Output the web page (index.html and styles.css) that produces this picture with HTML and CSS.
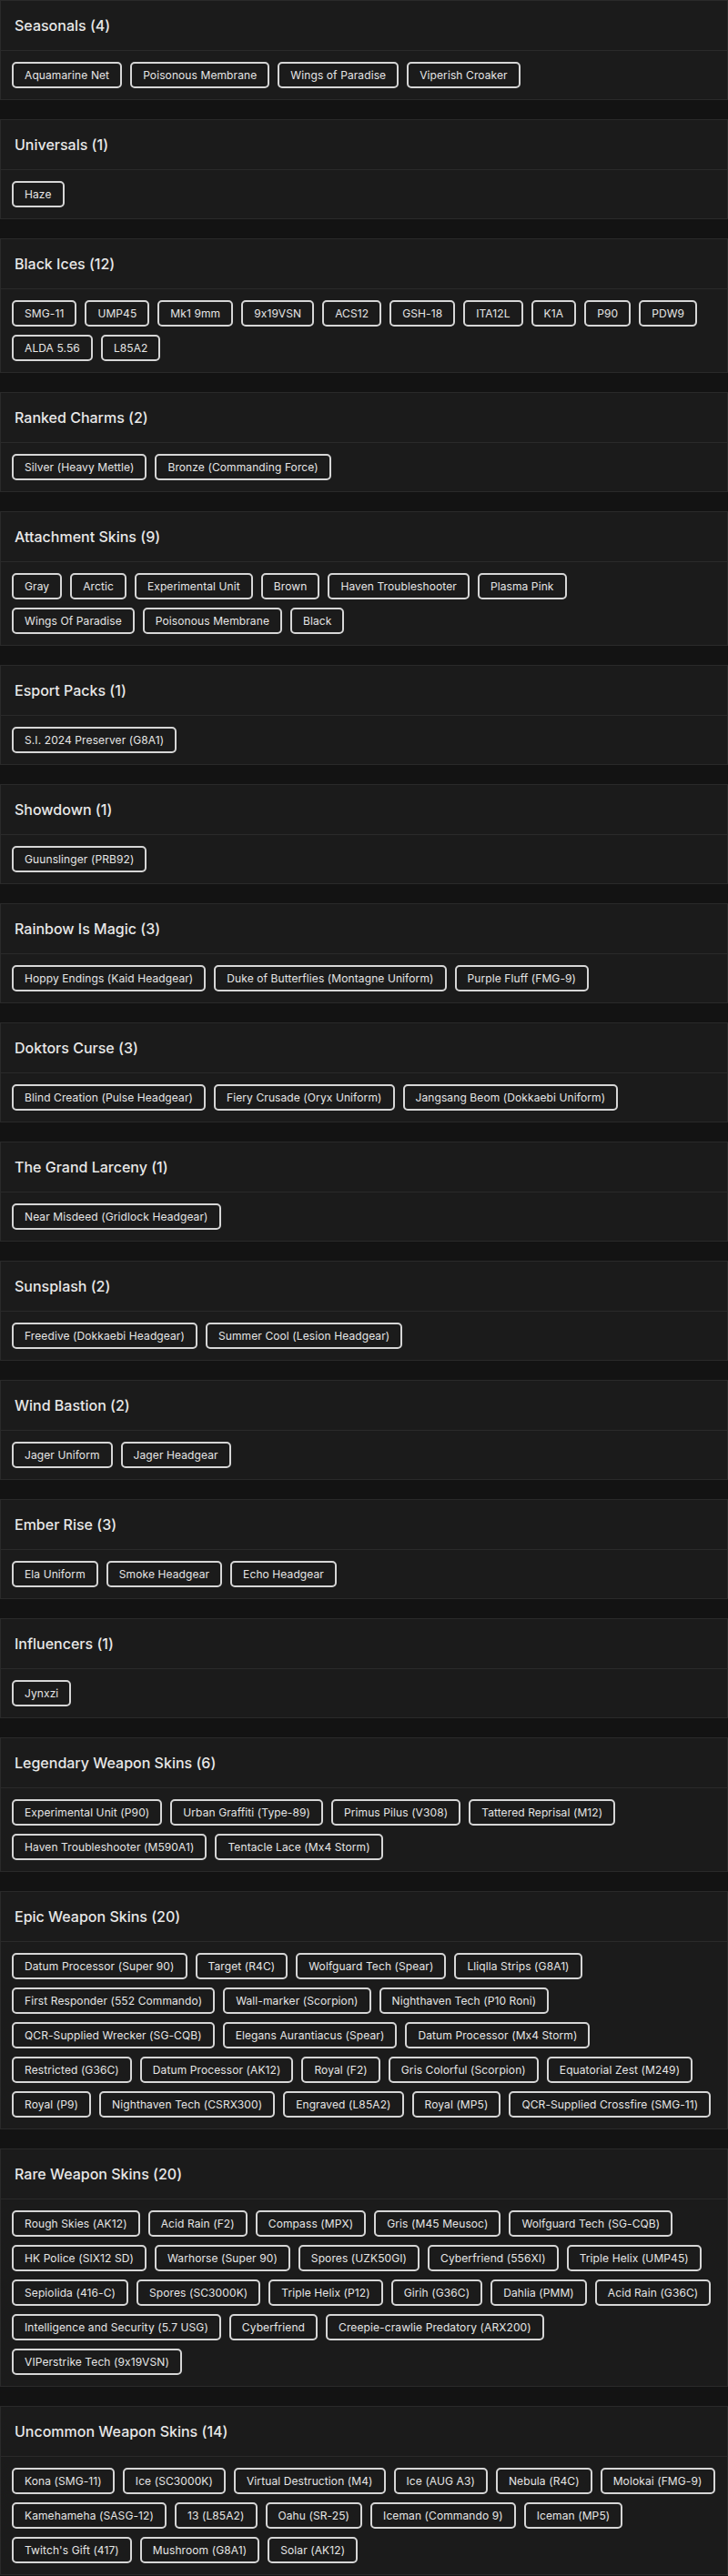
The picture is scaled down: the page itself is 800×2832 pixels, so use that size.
FILE: index.html
```html
<!DOCTYPE html>
<html lang="en">
<head>
<meta charset="utf-8">
<title>Collection</title>
<link rel="stylesheet" href="styles.css">
</head>
<body>
<main class="list">

<section class="card">
  <h2 class="card-head">Seasonals (4)</h2>
  <div class="chips">
    <div class="row"><span class="chip">Aquamarine Net</span><span class="chip">Poisonous Membrane</span><span class="chip">Wings of Paradise</span><span class="chip">Viperish Croaker</span></div>
  </div>
</section>

<section class="card">
  <h2 class="card-head">Universals (1)</h2>
  <div class="chips">
    <div class="row"><span class="chip">Haze</span></div>
  </div>
</section>

<section class="card">
  <h2 class="card-head">Black Ices (12)</h2>
  <div class="chips">
    <div class="row"><span class="chip">SMG-11</span><span class="chip">UMP45</span><span class="chip">Mk1 9mm</span><span class="chip">9x19VSN</span><span class="chip">ACS12</span><span class="chip">GSH-18</span><span class="chip">ITA12L</span><span class="chip">K1A</span><span class="chip">P90</span><span class="chip">PDW9</span></div>
    <div class="row"><span class="chip">ALDA 5.56</span><span class="chip">L85A2</span></div>
  </div>
</section>

<section class="card">
  <h2 class="card-head">Ranked Charms (2)</h2>
  <div class="chips">
    <div class="row"><span class="chip">Silver (Heavy Mettle)</span><span class="chip">Bronze (Commanding Force)</span></div>
  </div>
</section>

<section class="card">
  <h2 class="card-head">Attachment Skins (9)</h2>
  <div class="chips">
    <div class="row"><span class="chip">Gray</span><span class="chip">Arctic</span><span class="chip">Experimental Unit</span><span class="chip">Brown</span><span class="chip">Haven Troubleshooter</span><span class="chip">Plasma Pink</span></div>
    <div class="row"><span class="chip">Wings Of Paradise</span><span class="chip">Poisonous Membrane</span><span class="chip">Black</span></div>
  </div>
</section>

<section class="card">
  <h2 class="card-head">Esport Packs (1)</h2>
  <div class="chips">
    <div class="row"><span class="chip">S.I. 2024 Preserver (G8A1)</span></div>
  </div>
</section>

<section class="card">
  <h2 class="card-head">Showdown (1)</h2>
  <div class="chips">
    <div class="row"><span class="chip">Guunslinger (PRB92)</span></div>
  </div>
</section>

<section class="card">
  <h2 class="card-head">Rainbow Is Magic (3)</h2>
  <div class="chips">
    <div class="row"><span class="chip">Hoppy Endings (Kaid Headgear)</span><span class="chip">Duke of Butterflies (Montagne Uniform)</span><span class="chip">Purple Fluff (FMG-9)</span></div>
  </div>
</section>

<section class="card">
  <h2 class="card-head">Doktors Curse (3)</h2>
  <div class="chips">
    <div class="row"><span class="chip">Blind Creation (Pulse Headgear)</span><span class="chip">Fiery Crusade (Oryx Uniform)</span><span class="chip">Jangsang Beom (Dokkaebi Uniform)</span></div>
  </div>
</section>

<section class="card">
  <h2 class="card-head">The Grand Larceny (1)</h2>
  <div class="chips">
    <div class="row"><span class="chip">Near Misdeed (Gridlock Headgear)</span></div>
  </div>
</section>

<section class="card">
  <h2 class="card-head">Sunsplash (2)</h2>
  <div class="chips">
    <div class="row"><span class="chip">Freedive (Dokkaebi Headgear)</span><span class="chip">Summer Cool (Lesion Headgear)</span></div>
  </div>
</section>

<section class="card">
  <h2 class="card-head">Wind Bastion (2)</h2>
  <div class="chips">
    <div class="row"><span class="chip">Jager Uniform</span><span class="chip">Jager Headgear</span></div>
  </div>
</section>

<section class="card">
  <h2 class="card-head">Ember Rise (3)</h2>
  <div class="chips">
    <div class="row"><span class="chip">Ela Uniform</span><span class="chip">Smoke Headgear</span><span class="chip">Echo Headgear</span></div>
  </div>
</section>

<section class="card">
  <h2 class="card-head">Influencers (1)</h2>
  <div class="chips">
    <div class="row"><span class="chip">Jynxzi</span></div>
  </div>
</section>

<section class="card">
  <h2 class="card-head">Legendary Weapon Skins (6)</h2>
  <div class="chips">
    <div class="row"><span class="chip">Experimental Unit (P90)</span><span class="chip">Urban Graffiti (Type-89)</span><span class="chip">Primus Pilus (V308)</span><span class="chip">Tattered Reprisal (M12)</span></div>
    <div class="row"><span class="chip">Haven Troubleshooter (M590A1)</span><span class="chip">Tentacle Lace (Mx4 Storm)</span></div>
  </div>
</section>

<section class="card">
  <h2 class="card-head">Epic Weapon Skins (20)</h2>
  <div class="chips">
    <div class="row"><span class="chip">Datum Processor (Super 90)</span><span class="chip">Target (R4C)</span><span class="chip">Wolfguard Tech (Spear)</span><span class="chip">Lliqlla Strips (G8A1)</span></div>
    <div class="row"><span class="chip">First Responder (552 Commando)</span><span class="chip">Wall-marker (Scorpion)</span><span class="chip">Nighthaven Tech (P10 Roni)</span></div>
    <div class="row"><span class="chip">QCR-Supplied Wrecker (SG-CQB)</span><span class="chip">Elegans Aurantiacus (Spear)</span><span class="chip">Datum Processor (Mx4 Storm)</span></div>
    <div class="row"><span class="chip">Restricted (G36C)</span><span class="chip">Datum Processor (AK12)</span><span class="chip">Royal (F2)</span><span class="chip">Gris Colorful (Scorpion)</span><span class="chip">Equatorial Zest (M249)</span></div>
    <div class="row"><span class="chip">Royal (P9)</span><span class="chip">Nighthaven Tech (CSRX300)</span><span class="chip">Engraved (L85A2)</span><span class="chip">Royal (MP5)</span><span class="chip">QCR-Supplied Crossfire (SMG-11)</span></div>
  </div>
</section>

<section class="card">
  <h2 class="card-head">Rare Weapon Skins (20)</h2>
  <div class="chips">
    <div class="row"><span class="chip">Rough Skies (AK12)</span><span class="chip">Acid Rain (F2)</span><span class="chip">Compass (MPX)</span><span class="chip">Gris (M45 Meusoc)</span><span class="chip">Wolfguard Tech (SG-CQB)</span></div>
    <div class="row"><span class="chip">HK Police (SIX12 SD)</span><span class="chip">Warhorse (Super 90)</span><span class="chip">Spores (UZK50GI)</span><span class="chip">Cyberfriend (556XI)</span><span class="chip">Triple Helix (UMP45)</span></div>
    <div class="row"><span class="chip">Sepiolida (416-C)</span><span class="chip">Spores (SC3000K)</span><span class="chip">Triple Helix (P12)</span><span class="chip">Girih (G36C)</span><span class="chip">Dahlia (PMM)</span><span class="chip">Acid Rain (G36C)</span></div>
    <div class="row"><span class="chip">Intelligence and Security (5.7 USG)</span><span class="chip">Cyberfriend</span><span class="chip">Creepie-crawlie Predatory (ARX200)</span></div>
    <div class="row"><span class="chip">VIPerstrike Tech (9x19VSN)</span></div>
  </div>
</section>

<section class="card">
  <h2 class="card-head">Uncommon Weapon Skins (14)</h2>
  <div class="chips">
    <div class="row"><span class="chip">Kona (SMG-11)</span><span class="chip">Ice (SC3000K)</span><span class="chip">Virtual Destruction (M4)</span><span class="chip">Ice (AUG A3)</span><span class="chip">Nebula (R4C)</span><span class="chip">Molokai (FMG-9)</span></div>
    <div class="row"><span class="chip">Kamehameha (SASG-12)</span><span class="chip">13 (L85A2)</span><span class="chip">Oahu (SR-25)</span><span class="chip">Iceman (Commando 9)</span><span class="chip">Iceman (MP5)</span></div>
    <div class="row"><span class="chip">Twitch's Gift (417)</span><span class="chip">Mushroom (G8A1)</span><span class="chip">Solar (AK12)</span></div>
  </div>
</section>

</main>
</body>
</html>
```

FILE: styles.css
```css
html, body {
  margin: 0;
  padding: 0;
  background: #131313;
}

body {
  font-family: Inter, "Open Sans", "DejaVu Sans", sans-serif;
  font-feature-settings: "calt" 0;
  color: #e4e4e4;
}

.list {
  display: flex;
  flex-direction: column;
  gap: 21px;
}

.card {
  background: #1b1b1b;
  border: 1px solid #2a2a2a;
}

.card-head {
  margin: 0;
  height: 54px;
  padding: 0 15px;
  display: flex;
  align-items: center;
  border-bottom: 1px solid #2a2a2a;
  font-size: 16px;
  font-weight: 500;
  color: #e8e8e8;
}

.chips {
  padding: 12px;
  display: flex;
  flex-direction: column;
  gap: 9px;
}

.row {
  display: flex;
  gap: 9px;
}

.chip {
  box-sizing: border-box;
  height: 29px;
  padding: 0 12px;
  border: 2px solid #d6d6d6;
  border-radius: 5px;
  display: flex;
  align-items: center;
  white-space: nowrap;
  font-size: 12px;
  letter-spacing: 0.1px;
  color: #e6e6e6;
}
```
